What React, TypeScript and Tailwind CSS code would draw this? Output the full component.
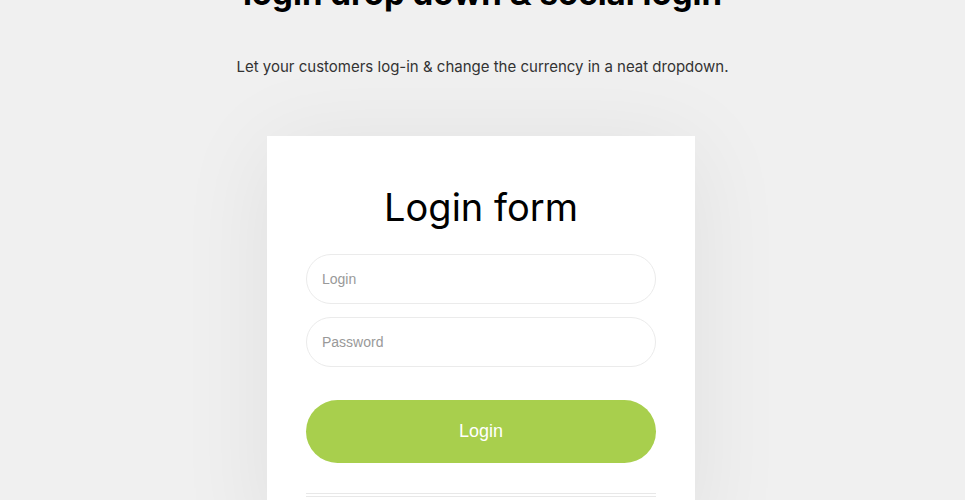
import React from "react";

export default function App() {
  return (
    <div className="min-h-screen w-full bg-[#f0f0f0] overflow-hidden flex flex-col items-center font-['Inter',sans-serif]">
      <h1 className="mt-[-27px] text-[33px] leading-[40px] font-bold text-black whitespace-nowrap">
        login drop down &amp; social login
      </h1>
      <p className="mt-[42px] text-[15px] leading-[24px] text-[#333]">
        Let your customers log-in &amp; change the currency in a neat dropdown.
      </p>
      <div className="mt-[57px] mr-[3px] w-[428px] bg-white shadow-[0_10px_90px_rgba(0,0,0,0.07)] px-[39px] pt-[48px] pb-[40px]">
        <h2 className="text-[38px] leading-[46px] text-black text-center font-normal">Login form</h2>
        <div className="mt-[24px] flex flex-col gap-[13px]">
          <input
            placeholder="Login"
            className="h-[50px] w-full rounded-full border border-[#ebebeb] px-[15px] text-[14px] font-['Liberation_Sans',sans-serif] text-[#333] placeholder:text-[#999] outline-none"
          />
          <input
            type="password"
            placeholder="Password"
            className="h-[50px] w-full rounded-full border border-[#ebebeb] px-[15px] text-[14px] font-['Liberation_Sans',sans-serif] text-[#333] placeholder:text-[#999] outline-none"
          />
        </div>
        <button className="mt-[33px] h-[63px] w-full rounded-full bg-[#a8cf4d] text-white text-[18px] font-['Liberation_Sans',sans-serif]">
          Login
        </button>
        <div className="mt-[30px] flex flex-col gap-[2px]">
          <div className="h-px bg-[#e8e8e8]" />
          <div className="h-px bg-[#e8e8e8]" />
        </div>
      </div>
    </div>
  );
}
